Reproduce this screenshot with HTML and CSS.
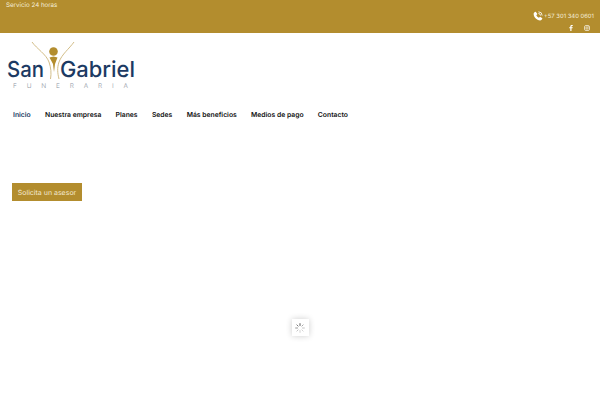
FILE: index.html
```html
<!DOCTYPE html>
<html lang="es">
<head>
<meta charset="utf-8">
<title>San Gabriel Funeraria</title>
<link rel="stylesheet" href="styles.css">
</head>
<body>
<header class="topbar">
  <div class="service">Servicio 24 horas</div>
  <div class="contact">
    <div class="phone">
      <svg class="phone-icon" viewBox="0 0 24 24" width="10" height="10"><path fill="#fff" d="M6.6 1.500 10.500 7 8 10c1.200 2.600 3.400 4.900 6.200 6.200l2.800-2.500 5.500 3.600c-.4 2.800-2.600 5.200-5.500 5.200C8.700 22.500 1.500 14.500 1.500 6.800 1.500 4.200 3.900 2 6.600 1.500Z"/><path fill="none" stroke="#fff" stroke-width="2" d="M13 6a5 5 0 0 1 5 5M13 2a9 9 0 0 1 9 9"/></svg>
      <span>+57 301 340 0601</span>
    </div>
    <div class="social">
      <svg viewBox="0 0 24 24" width="6" height="6"><path fill="#fff" d="M14 24V13h4l1-4.500h-5V6c0-1.500.5-2.200 2.300-2.200H19V0h-4c-4 0-5.800 2.400-5.800 5.800v2.700H5V13h4.200v11Z"/></svg>
      <svg viewBox="0 0 24 24" width="6" height="6"><rect x="2" y="2" width="20" height="20" rx="6" fill="none" stroke="#fff" stroke-width="2.600"/><circle cx="12" cy="12" r="4.800" fill="none" stroke="#fff" stroke-width="2.600"/><circle cx="18" cy="6" r="1.500" fill="#fff"/></svg>
    </div>
  </div>
</header>
<main class="page">
  <svg class="logo" viewBox="0 0 130 50" width="130" height="50" role="img" aria-label="San Gabriel Funeraria">
    <path fill="none" stroke="#cdb57a" stroke-width=".9" d="M25 2C30 9 39 14 42 22 44 28 44.500 33 43.500 39"/>
    <path fill="none" stroke="#cdb57a" stroke-width=".9" d="M67 2C62 9 55 14 52 22 50 28 50.500 33 52 39"/>
    <circle cx="46.500" cy="11.500" r="4.300" fill="#b38d2e"/>
    <path fill="#b38d2e" d="M42.500 17.500 46.500 16.500 50.500 17.500 48 24 47 32 46 24Z"/>
    <text class="logo-name" x="0" y="37" textLength="37" lengthAdjust="spacingAndGlyphs">San</text>
    <text class="logo-name" x="53" y="37" textLength="75" lengthAdjust="spacingAndGlyphs">Gabriel</text>
    <text class="logo-sub" x="6" y="47.500" textLength="115">FUNERARIA</text>
  </svg>
  <nav class="nav">
    <a class="nav-link active" href="#">Inicio</a>
    <a class="nav-link" href="#">Nuestra empresa</a>
    <a class="nav-link" href="#">Planes</a>
    <a class="nav-link" href="#">Sedes</a>
    <a class="nav-link" href="#">Más beneficios</a>
    <a class="nav-link" href="#">Medios de pago</a>
    <a class="nav-link" href="#">Contacto</a>
  </nav>
  <a class="cta" href="#">Solicita un asesor</a>
  <div class="loader-row">
    <div class="loader">
      <svg viewBox="0 0 16 16" width="10" height="10">
        <g stroke-width="1.400" stroke-linecap="round">
          <path stroke="#444" d="M8 1v3"/>
          <path stroke="#999" d="M13 3l-2 2"/>
          <path stroke="#bbb" d="M15 8h-3"/>
          <path stroke="#ccc" d="M13 13l-2-2"/>
          <path stroke="#ccc" d="M8 15v-3"/>
          <path stroke="#bbb" d="M3 13l2-2"/>
          <path stroke="#888" d="M1 8h3"/>
          <path stroke="#666" d="M3 3l2 2"/>
        </g>
      </svg>
    </div>
  </div>
</main>
</body>
</html>
```
FILE: styles.css
```css
* { box-sizing: border-box; }
html, body { margin: 0; height: 100%; }
body {
  background: #fff;
  font-family: "Inter", "Liberation Sans", sans-serif;
  text-rendering: geometricPrecision;
  overflow: hidden;
}
.topbar {
  height: 33px;
  background: #b38d2e;
  color: #f6efdc;
  display: flex;
  justify-content: space-between;
  padding: 0 6px;
  font-size: 6px;
}
.service { padding-top: 2px; line-height: 8px; font-size: 6.200px; }
.contact {
  display: flex;
  flex-direction: column;
  align-items: flex-end;
  padding-top: 11px;
  gap: 4px;
}
.phone { display: flex; align-items: center; gap: 1px; line-height: 9px; font-size: 5.900px; }
.phone-icon { display: block; }
.social { display: flex; gap: 10px; margin-right: 4px; }
.social svg { display: block; }
.page { padding: 7px 0 0 7px; }
.logo { display: block; }
.logo-name { font-family: "Inter", sans-serif; font-size: 22px; font-weight: 500; fill: #1c3a63; }
.logo-sub { font-family: "Inter", sans-serif; font-size: 6.500px; font-weight: 300; fill: #8d94a1; }
.nav {
  display: flex;
  gap: 14.300px;
  margin: 19px 0 0 6px;
  height: 12px;
  align-items: center;
}
.nav-link {
  color: #111;
  font-size: 6.800px;
  font-weight: 600;
  line-height: 12px;
  text-decoration: none;
  white-space: nowrap;
}
.nav-link.active { color: #1c3a63; }
.cta {
  display: flex;
  align-items: center;
  justify-content: center;
  width: 70px;
  height: 18px;
  margin: 62px 0 0 5px;
  background: #b38d2e;
  color: #f3ead2;
  font-size: 7px;
  text-decoration: none;
}
.loader-row { display: flex; justify-content: center; margin-top: 118px; margin-left: -7px; }
.loader {
  width: 17px;
  height: 17px;
  display: flex;
  align-items: center;
  justify-content: center;
  background: #fff;
  box-shadow: 0 0 6px rgba(0, 0, 0, .2);
}
```
